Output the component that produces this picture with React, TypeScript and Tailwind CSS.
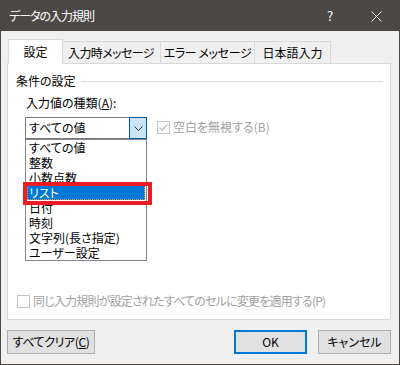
import React from 'react';

const items = ['すべての値', '整数', '小数点数', 'リスト', '日付', '時刻', '文字列(長さ指定)', 'ユーザー設定'];

function CheckBox({ checked }: { checked?: boolean }) {
  return (
    <div className="w-[13px] h-[13px] border border-[#c4c4c4] bg-white flex items-center justify-center shrink-0">
      {checked && (
        <svg width="11" height="11" viewBox="0 0 11 11">
          <path d="M1.5 5.5 L4 8 L9.5 2.5" fill="none" stroke="#bcbcbc" strokeWidth="1.3" />
        </svg>
      )}
    </div>
  );
}

export default function App() {
  return (
    <div className="w-[400px] h-[365px] bg-[#f0f0f0] border border-[#4b4846] flex flex-col font-['Noto_Sans_CJK_JP',sans-serif] [font-feature-settings:'palt'] text-[12px] leading-[16px] text-black select-none">
      {/* Title bar */}
      <div className="h-[30px] bg-[#4b4846] flex items-center text-white shrink-0">
        <span className="pl-[8px] tracking-[-1px]">データの入力規則</span>
        <div className="ml-auto flex h-full">
          <div className="w-[46px] flex items-center justify-center text-[13px]">?</div>
          <div className="w-[46px] flex items-center justify-center">
            <svg width="11" height="11" viewBox="0 0 11 11">
              <path d="M0.5 0.5 L10.5 10.5 M10.5 0.5 L0.5 10.5" stroke="#ffffff" strokeWidth="1" />
            </svg>
          </div>
        </div>
      </div>

      <div className="pl-[6px] pr-[8px] flex flex-col">
        {/* Tabs */}
        <div className="mt-[8px] h-[24px] flex items-end">
          <div className="ml-[1px] w-[55px] h-[25px] -mb-px relative z-10 bg-white border-l border-t border-r border-[#d9d9d9] flex items-center justify-center">
            設定
          </div>
          <div className="-ml-px w-[99px] h-[22px] border-t border-r border-[#d9d9d9] flex items-center justify-center tracking-[-0.6px]">
            入力時メッセージ
          </div>
          <div className="-ml-px w-[95px] h-[22px] border-l border-t border-r border-[#d9d9d9] flex items-center justify-center tracking-[-0.4px]">
            エラー メッセージ
          </div>
          <div className="-ml-px w-[77px] h-[22px] border-l border-t border-r border-[#d9d9d9] flex items-center justify-center">
            日本語入力
          </div>
        </div>

        {/* Panel */}
        <div className="h-[257px] bg-white border border-[#d9d9d9] pl-[8px] pr-[7px] flex flex-col">
          <div className="mt-[9px] h-[16px] flex items-center">
            <span>条件の設定</span>
            <div className="flex-1 h-px bg-[#dcdcdc] ml-[5px]" />
          </div>

          <div className="mt-[6px] ml-[10px] h-[16px]">
            入力値の種類(<span className="underline">A</span>):
          </div>

          <div className="mt-[6px] ml-[9px] flex items-start">
            <div className="relative w-[122px] h-[22px] border border-[#7a7a7a] bg-white flex items-center">
              <span className="pl-[3px] flex-1">すべての値</span>
              <div className="w-[18px] h-[22px] -mr-px -mt-px -mb-px self-start bg-[#cce4f7] border border-[#005499] flex items-center justify-center">
                <svg width="9" height="5" viewBox="0 0 9 5">
                  <path d="M0.5 0.5 L4.5 4.5 L8.5 0.5" fill="none" stroke="#333333" strokeWidth="1" />
                </svg>
              </div>

              {/* Dropdown list */}
              <div className="absolute left-[-1px] top-[21px] w-[122px] h-[122px] border border-[#828790] bg-white z-20 flex flex-col">
                {items.map((item) => (
                  <div
                    key={item}
                    className={
                      item === 'リスト'
                        ? 'h-[15px] mx-px leading-[15px] pl-[2px] bg-[#0078d7] text-white outline-1 outline-dotted outline-[#d8a060] -outline-offset-1'
                        : 'h-[15px] leading-[15px] pl-[3px]'
                    }
                  >
                    {item}
                  </div>
                ))}
                <div className="absolute left-[-3px] top-[42px] w-[129px] h-[23px] border-4 border-[#ec1c24]" />
              </div>
            </div>

            <div className="ml-[10px] mt-[2px] flex items-center gap-[3px] text-[#a0a0a0]">
              <CheckBox checked />
              <span>空白を無視する(B)</span>
            </div>
          </div>

          <div className="mt-auto mb-[10px] ml-[1px] h-[16px] flex items-center gap-[3px] text-[#a0a0a0]">
            <CheckBox />
            <span className="tracking-[-0.8px]">同じ入力規則が設定されたすべてのセルに変更を適用する(P)</span>
          </div>
        </div>

        {/* Buttons */}
        <div className="mt-[10px] h-[24px] flex">
          <button className="w-[88px] h-[24px] bg-[#e1e1e1] border border-[#adadad] flex items-center justify-center tracking-[-0.4px]">
            すべてクリア(<span className="underline">C</span>)
          </button>
          <button className="ml-auto w-[73px] h-[24px] bg-[#e1e1e1] border-2 border-[#0078d7] flex items-center justify-center">
            OK
          </button>
          <button className="ml-[11px] w-[73px] h-[24px] bg-[#e1e1e1] border border-[#adadad] flex items-center justify-center">
            キャンセル
          </button>
        </div>
      </div>
    </div>
  );
}
